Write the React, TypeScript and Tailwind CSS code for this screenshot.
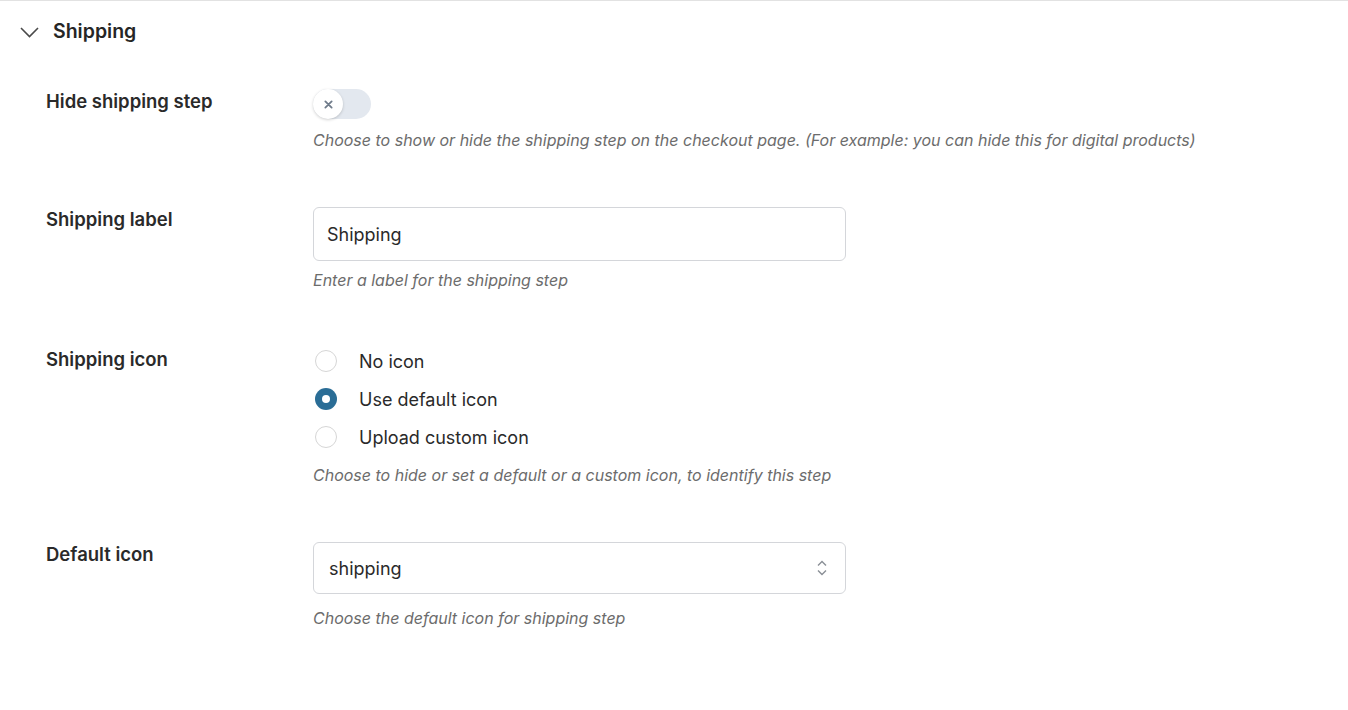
import { useState } from "react";

const font = { fontFamily: "Inter, 'Noto Sans', sans-serif" };

function Toggle() {
  return (
    <div className="relative h-[30px] w-[58px] rounded-full bg-[#e3e8ef]">
      <div className="absolute left-0 top-0 flex h-[30px] w-[30px] items-center justify-center rounded-full bg-white shadow-[0_1px_3px_rgba(0,0,0,0.18)]">
        <svg width="9" height="9" viewBox="0 0 10 10" fill="none">
          <path d="M1.5 1.5l7 7M8.5 1.5l-7 7" stroke="#6f7b8a" strokeWidth="2" strokeLinecap="round" />
        </svg>
      </div>
    </div>
  );
}

function Radio({ checked }: { checked: boolean }) {
  if (checked) {
    return (
      <span className="flex h-[22px] w-[22px] items-center justify-center rounded-full bg-[#2a6d96]">
        <span className="h-[8px] w-[8px] rounded-full bg-white" />
      </span>
    );
  }
  return <span className="h-[22px] w-[22px] rounded-full border border-[#d6d6d6] bg-white" />;
}

function Row({ label, children }: { label: string; children: React.ReactNode }) {
  return (
    <div className="grid grid-cols-[267px_1fr] pl-[46px]">
      <div className="text-[18.5px] font-semibold leading-[24px] text-[#2a2a2a]">{label}</div>
      <div>{children}</div>
    </div>
  );
}

function Help({ children, className }: { children: React.ReactNode; className: string }) {
  return <p className={`text-[16px] italic leading-[24px] text-[#6c6c6c] ${className}`}>{children}</p>;
}

export default function App() {
  const [choice, setChoice] = useState("default");
  const [label, setLabel] = useState("Shipping");
  const options = [
    { id: "none", text: "No icon" },
    { id: "default", text: "Use default icon" },
    { id: "custom", text: "Upload custom icon" },
  ];

  return (
    <main className="min-h-screen border-t border-[#e2e2e2] bg-white" style={font}>
      <div className="flex h-[62px] items-center gap-[14px] pl-[20px]">
        <svg width="19" height="11" viewBox="0 0 19 11" fill="none">
          <path d="M1 1l8.5 8.5L18 1" stroke="#4a4a4a" strokeWidth="1.6" />
        </svg>
        <h2 className="text-[19.5px] font-semibold text-[#262626]">Shipping</h2>
      </div>

      <div className="mt-[26px] flex flex-col gap-[55px]">
        <Row label="Hide shipping step">
          <Toggle />
          <Help className="mt-[9px]">
            Choose to show or hide the shipping step on the checkout page. (For example: you can hide this for digital products)
          </Help>
        </Row>

        <Row label="Shipping label">
          <input
            value={label}
            onChange={(e) => setLabel(e.target.value)}
            className="h-[54px] w-[533px] rounded-md border border-[#d4d6da] px-[13px] text-[18px] text-[#2a2a2a] outline-none"
          />
          <Help className="mt-[7px]">Enter a label for the shipping step</Help>
        </Row>

        <Row label="Shipping icon">
          <div className="flex flex-col gap-[10px]">
            {options.map((o) => (
              <label
                key={o.id}
                onClick={() => setChoice(o.id)}
                className="flex h-[28px] cursor-pointer items-center gap-[22px] pl-[2px] text-[18px] text-[#2a2a2a]"
              >
                <Radio checked={choice === o.id} />
                {o.text}
              </label>
            ))}
          </div>
          <Help className="mt-[12px]">Choose to hide or set a default or a custom icon, to identify this step</Help>
        </Row>

        <Row label="Default icon">
          <div className="flex h-[52px] w-[533px] items-center justify-between rounded-md border border-[#d4d6da] pl-[15px] pr-[17px] text-[18px] text-[#2a2a2a]">
            <span>shipping</span>
            <svg width="12" height="18" viewBox="0 0 12 18" fill="none">
              <path d="M2 6.5l4-4 4 4M2 11.5l4 4 4-4" stroke="#8a8f96" strokeWidth="1.4" />
            </svg>
          </div>
          <Help className="mt-[12px]">Choose the default icon for shipping step</Help>
        </Row>
      </div>
    </main>
  );
}
